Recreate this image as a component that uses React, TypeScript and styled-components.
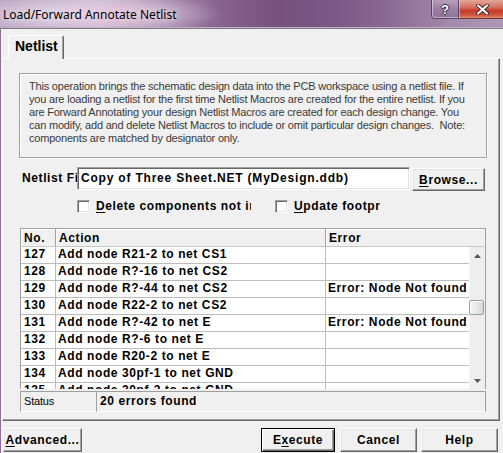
import React from 'react';
import styled, { createGlobalStyle } from 'styled-components';

const ui = `"Liberation Sans", Arial, sans-serif`;

interface NetlistRow {
  no: number;
  action: string;
  error: string;
}

const description = [
  'This operation brings the schematic design data into the PCB workspace using a netlist file. If',
  'you are loading a netlist for the first time Netlist Macros are created for the entire netlist. If you',
  'are Forward Annotating your design Netlist Macros are created for each design change. You',
  'can modify, add and delete Netlist Macros to include or omit particular design changes.  Note:',
  'components are matched by designator only.',
];

const rows: NetlistRow[] = [
  { no: 127, action: 'Add node R21-2 to net CS1', error: '' },
  { no: 128, action: 'Add node R?-16 to net CS2', error: '' },
  { no: 129, action: 'Add node R?-44 to net CS2', error: 'Error: Node Not found' },
  { no: 130, action: 'Add node R22-2 to net CS2', error: '' },
  { no: 131, action: 'Add node R?-42 to net E', error: 'Error: Node Not found' },
  { no: 132, action: 'Add node R?-6 to net E', error: '' },
  { no: 133, action: 'Add node R20-2 to net E', error: '' },
  { no: 134, action: 'Add node 30pf-1 to net GND', error: '' },
  { no: 135, action: 'Add node 30pf-2 to net GND', error: '' },
];

const GlobalStyle = createGlobalStyle`
  html, body {
    margin: 0;
    padding: 0;
    background: #f0f0f0;
  }
  body {
    width: 503px;
    height: 453px;
    overflow: hidden;
    font-family: ${ui};
  }
  * {
    box-sizing: border-box;
  }
`;

const Window = styled.div`
  width: 503px;
  height: 453px;
  display: flex;
  flex-direction: column;
  overflow: hidden;
  background: #f0f0f0;
`;

const TitleBar = styled.div`
  height: 28px;
  flex: none;
  display: flex;
  justify-content: space-between;
  align-items: flex-start;
  border-bottom: 1px solid #c0afc6;
  background:
    radial-gradient(ellipse 70px 14px at 112px 15px, rgba(226, 160, 196, 0.55), rgba(226, 160, 196, 0) 100%),
    radial-gradient(ellipse 130px 20px at 95px 14px, rgba(240, 232, 242, 0.85), rgba(240, 232, 242, 0) 100%),
    linear-gradient(90deg, #bfa9c6 0%, #c6b3cc 20%, #a88aaf 34%, #86628d 44%, #76517e 55%, #7a5784 66%, #8b6c95 78%, #a48aab 90%, #ae98b5 100%);
`;

const Title = styled.div`
  padding: 6px 0 0 3px;
  font-family: "Noto Sans", "Liberation Sans", sans-serif;
  font-size: 12px;
  color: #000;
  text-shadow: 0 0 6px rgba(255, 255, 255, 0.9);
  white-space: nowrap;
`;

const Captions = styled.div`
  display: flex;
  align-items: flex-start;
`;

const HelpCaption = styled.div`
  width: 27px;
  height: 19px;
  display: flex;
  align-items: center;
  justify-content: center;
  border: 1px solid #5d4464;
  border-top: none;
  border-right: none;
  border-bottom-left-radius: 4px;
  box-shadow: inset 1px -1px 0 rgba(255, 255, 255, 0.45);
  background: linear-gradient(180deg, rgba(190, 170, 198, 0.7) 0%, rgba(150, 120, 160, 0.55) 50%, rgba(130, 100, 140, 0.6) 100%);
  font-family: ${ui};
  font-weight: bold;
  font-size: 13px;
  color: #fff;
  text-shadow: -1px 0 #3a2a40, 1px 0 #3a2a40, 0 -1px #3a2a40, 0 1px #3a2a40;
`;

const CloseCaption = styled.div`
  width: 45px;
  height: 19px;
  display: flex;
  align-items: center;
  justify-content: center;
  padding-left: 3px;
  border-left: 1px solid #5d4464;
  border-bottom: 1px solid #6a3a3a;
  box-shadow: inset 1px 0 0 rgba(255, 255, 255, 0.4);
  background: linear-gradient(180deg, #e2a898 0%, #d47060 40%, #c43a26 60%, #d05a40 85%, #e08a70 100%);
`;

const Client = styled.div`
  flex: 1;
  display: flex;
  flex-direction: column;
  border-top: 1px solid #7d7d7d;
  border-left: 1px solid #8f7198;
`;

const TabStrip = styled.div`
  display: flex;
  padding: 6px 0 0 7px;
  position: relative;
  z-index: 1;
`;

const Tab = styled.div`
  width: 56px;
  height: 24px;
  margin-bottom: -1px;
  padding: 2px 0 0 6px;
  background: #f0f0f0;
  border-top: 1px solid #fff;
  border-left: 1px solid #fff;
  border-right: 1px solid #696969;
  border-top-left-radius: 2px;
  border-top-right-radius: 2px;
  box-shadow: inset -1px 0 0 #a0a0a0;
  font-family: ${ui};
  font-weight: bold;
  font-size: 14px;
  line-height: 16px;
  color: #000;
`;

const Panel = styled.div`
  margin-left: 1px;
  width: 498px;
  height: 363px;
  display: flex;
  flex-direction: column;
  border-top: 1px solid #fff;
  border-left: 1px solid #fff;
  border-right: 1px solid #696969;
  border-bottom: 1px solid #696969;
  box-shadow: inset -1px -1px 0 #a0a0a0;
`;

const GroupBox = styled.div`
  margin: 14px 0 0 16px;
  width: 468px;
  height: 85px;
  padding: 6px 0 0 9px;
  border: 1px solid #a0a0a0;
  box-shadow: inset 1px 1px 0 #fff, 1px 1px 0 #fff;
`;

const DescLine = styled.div`
  font-family: ${ui};
  font-size: 11px;
  line-height: 13px;
  letter-spacing: -0.2px;
  color: #3a3a3a;
  white-space: pre;
`;

const FileRow = styled.div`
  display: flex;
  align-items: flex-start;
  height: 24px;
  margin: 9px 0 0 19px;
`;

const boldText = `
  font-family: ${ui};
  font-weight: bold;
  font-size: 12px;
  letter-spacing: 0.6px;
  color: #000;
`;

const FieldLabel = styled.div`
  ${boldText}
  width: 55px;
  height: 23px;
  line-height: 23px;
  overflow: hidden;
  white-space: nowrap;
`;

const FileInput = styled.div`
  ${boldText}
  width: 333px;
  height: 23px;
  padding: 0 0 0 3px;
  line-height: 20px;
  letter-spacing: 0.8px;
  background: #fff;
  border-top: 1px solid #a0a0a0;
  border-left: 1px solid #a0a0a0;
  border-bottom: 1px solid #fff;
  border-right: 1px solid #fff;
  box-shadow: inset 1px 1px 0 #696969, inset -1px -1px 0 #e3e3e3;
  white-space: nowrap;
  overflow: hidden;
`;

const Button = styled.div<{ $width: number; $default?: boolean }>`
  ${boldText}
  width: ${({ $width }) => $width}px;
  height: 24px;
  display: flex;
  align-items: center;
  justify-content: center;
  background: #f0f0f0;
  border: 1px solid;
  border-color: ${({ $default }) => ($default ? '#000' : '#fff #696969 #696969 #fff')};
  box-shadow: ${({ $default }) =>
    $default
      ? 'inset 1px 1px 0 #fff, inset -1px -1px 0 #696969, inset -2px -2px 0 #a0a0a0'
      : 'inset -1px -1px 0 #a0a0a0, inset 1px 1px 0 #e3e3e3'};
  white-space: nowrap;
  u {
    text-decoration: underline;
    text-underline-offset: 2px;
  }
`;

const BrowseButton = styled(Button)`
  height: 23px;
  margin: 1px 0 0 2px;
`;

const CheckRow = styled.div`
  display: flex;
  align-items: center;
  height: 14px;
  margin: 8px 0 0 74px;
`;

const CheckItem = styled.div<{ $labelWidth: number }>`
  display: flex;
  align-items: center;
  margin-right: 24px;

  span {
    ${boldText}
    width: ${({ $labelWidth }) => $labelWidth}px;
    margin-left: 6px;
    overflow: hidden;
    white-space: nowrap;
    line-height: 14px;
  }

  u {
    text-underline-offset: 2px;
  }
`;

const CheckBox = styled.div`
  width: 13px;
  height: 13px;
  background: #fff;
  border-top: 1px solid #a0a0a0;
  border-left: 1px solid #a0a0a0;
  border-bottom: 1px solid #fff;
  border-right: 1px solid #fff;
  box-shadow: inset 1px 1px 0 #696969, inset -1px -1px 0 #e3e3e3;
`;

const TableFrame = styled.div`
  width: 466px;
  margin: 15px 0 0 17px;
  display: flex;
  flex-direction: column;
`;

const HeaderRow = styled.div`
  display: grid;
  grid-template-columns: 35px 270px 1fr;
  height: 19px;
  border: 1px solid #a0a0a0;
  border-bottom-color: #c8c8c8;
  background: #f0f0f0;
`;

const HeaderCell = styled.div`
  ${boldText}
  padding: 1px 0 0 3px;
  line-height: 16px;
  border-right: 1px solid #a0a0a0;
  box-shadow: inset 1px 1px 0 #fff;

  &:last-child {
    border-right: none;
  }
`;

const ListBox = styled.div`
  display: flex;
  height: 142px;
  border-left: 1px solid #a0a0a0;
  border-right: 1px solid #a0a0a0;
  background: #fff;
`;

const Rows = styled.div`
  flex: 1;
  overflow: hidden;
`;

const Row = styled.div`
  display: grid;
  grid-template-columns: 35px 270px 1fr;
  height: 17px;
  border-bottom: 1px solid #bdbdbd;
`;

const Cell = styled.div`
  ${boldText}
  padding: 1px 0 0 3px;
  line-height: 12px;
  border-right: 1px solid #bdbdbd;
  overflow: hidden;
  white-space: nowrap;

  &:nth-child(2),
  &:last-child {
    padding-left: 2px;
  }
  &:last-child {
    border-right: none;
  }
`;

const ScrollBar = styled.div`
  width: 16px;
  display: flex;
  flex-direction: column;
  background: #eeeeee;
  border-left: 1px solid #f7f7f7;
`;

const ScrollArrow = styled.div`
  height: 17px;
  display: flex;
  align-items: center;
  justify-content: center;
`;

const ScrollTrack = styled.div`
  flex: 1;
`;

const ScrollThumb = styled.div`
  width: 15px;
  height: 15px;
  margin-left: -1px;
  border: 1px solid #9b9b9b;
  border-radius: 2px;
  background: linear-gradient(90deg, #f4f4f4 0%, #e8e8e8 50%, #d8d8d8 100%);
  box-shadow: inset 1px 1px 0 #fff;
`;

const StatusRow = styled.div`
  display: flex;
  padding-top: 2px;
`;

const StatusCell = styled.div<{ $width?: number }>`
  height: 21px;
  width: ${({ $width }) => ($width ? `${$width}px` : 'auto')};
  flex: ${({ $width }) => ($width ? 'none' : '1')};
  padding-left: 3px;
  border-top: 1px solid #a0a0a0;
  border-left: 1px solid #a0a0a0;
  border-bottom: 1px solid #fff;
  border-right: 1px solid #a0a0a0;
  line-height: 19px;
  white-space: nowrap;
`;

const StatusLabel = styled(StatusCell)`
  font-family: ${ui};
  font-size: 11px;
  letter-spacing: -0.2px;
  color: #000;
`;

const StatusText = styled(StatusCell)`
  ${boldText}
  border-left: none;
`;

const ButtonBar = styled.div`
  display: flex;
  justify-content: space-between;
  margin-top: 7px;
  padding: 0 5px 0 2px;
`;

const ButtonGroup = styled.div`
  display: flex;
  gap: 4px;
`;

const CloseGlyph = () => (
  <svg width="13" height="11" viewBox="0 0 13 11">
    <path d="M2 1.5 L11 9.5 M11 1.5 L2 9.5" stroke="#4a2a2a" strokeWidth="4" strokeLinecap="round" fill="none" />
    <path d="M2 1.5 L11 9.5 M11 1.5 L2 9.5" stroke="#fff" strokeWidth="2" strokeLinecap="round" fill="none" />
  </svg>
);

const Arrow = ({ down }: { down?: boolean }) => (
  <svg width="7" height="4" viewBox="0 0 7 4">
    <path d={down ? 'M0 0 H7 L3.5 4 Z' : 'M0 4 H7 L3.5 0 Z'} fill="#555" />
  </svg>
);

const App: React.FC = () => (
  <>
    <GlobalStyle />
    <Window>
      <TitleBar>
        <Title>Load/Forward Annotate Netlist</Title>
        <Captions>
          <HelpCaption>?</HelpCaption>
          <CloseCaption>
            <CloseGlyph />
          </CloseCaption>
        </Captions>
      </TitleBar>

      <Client>
        <TabStrip>
          <Tab>Netlist</Tab>
        </TabStrip>

        <Panel>
          <GroupBox>
            {description.map(line => (
              <DescLine key={line}>{line}</DescLine>
            ))}
          </GroupBox>

          <FileRow>
            <FieldLabel>Netlist File</FieldLabel>
            <FileInput>Copy of Three Sheet.NET (MyDesign.ddb)</FileInput>
            <BrowseButton $width={73}>
              <span>
                <u>B</u>rowse...
              </span>
            </BrowseButton>
          </FileRow>

          <CheckRow>
            <CheckItem $labelWidth={155}>
              <CheckBox />
              <span>
                <u>D</u>elete components not in netlist
              </span>
            </CheckItem>
            <CheckItem $labelWidth={86}>
              <CheckBox />
              <span>
                <u>U</u>pdate footprints
              </span>
            </CheckItem>
          </CheckRow>

          <TableFrame>
            <HeaderRow>
              <HeaderCell>No.</HeaderCell>
              <HeaderCell>Action</HeaderCell>
              <HeaderCell>Error</HeaderCell>
            </HeaderRow>
            <ListBox>
              <Rows>
                {rows.map(row => (
                  <Row key={row.no}>
                    <Cell>{row.no}</Cell>
                    <Cell>{row.action}</Cell>
                    <Cell>{row.error}</Cell>
                  </Row>
                ))}
              </Rows>
              <ScrollBar>
                <ScrollArrow>
                  <Arrow />
                </ScrollArrow>
                <ScrollTrack>
                  <ScrollThumb style={{ marginTop: 36 }} />
                </ScrollTrack>
                <ScrollArrow>
                  <Arrow down />
                </ScrollArrow>
              </ScrollBar>
            </ListBox>
            <StatusRow>
              <StatusLabel $width={77}>Status</StatusLabel>
              <StatusText>20 errors found</StatusText>
            </StatusRow>
          </TableFrame>
        </Panel>

        <ButtonBar>
          <Button $width={79}>
            <span>
              <u>A</u>dvanced...
            </span>
          </Button>
          <ButtonGroup>
            <Button $width={74} $default style={{ marginRight: 1 }}>
              <span>
                E<u>x</u>ecute
              </span>
            </Button>
            <Button $width={77}>Cancel</Button>
            <Button $width={77}>Help</Button>
          </ButtonGroup>
        </ButtonBar>
      </Client>
    </Window>
  </>
);

export default App;
